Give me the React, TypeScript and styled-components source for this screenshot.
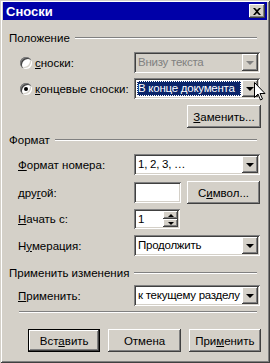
import React from 'react';
import styled, { createGlobalStyle } from 'styled-components';

const GlobalStyle = createGlobalStyle`
  html, body {
    margin: 0;
    padding: 0;
    background: #d4d0c8;
  }
  body {
    font-family: Tahoma, 'Liberation Sans', Arial, sans-serif;
    font-size: 11.5px;
    color: #000;
  }
`;

const raised = `
  box-shadow: inset -1px -1px #404040, inset 1px 1px #ffffff,
    inset -2px -2px #808080, inset 2px 2px #d4d0c8;
`;

const sunken = `
  box-shadow: inset 1px 1px #808080, inset -1px -1px #ffffff,
    inset 2px 2px #404040, inset -2px -2px #d4d0c8;
`;

const Window = styled.div`
  position: relative;
  width: 270px;
  height: 363px;
  box-sizing: border-box;
  padding: 2px 3px 3px 3px;
  background: #d4d0c8;
  box-shadow: inset 1px 1px #d4d0c8, inset -1px -1px #404040,
    inset 2px 2px #ffffff, inset -2px -2px #808080;
  display: flex;
  flex-direction: column;
`;

const TitleBar = styled.div`
  height: 18px;
  background: #0000a8;
  display: flex;
  align-items: center;
  justify-content: space-between;
  padding: 0 2px 0 3px;
`;

const Title = styled.span`
  color: #fff;
  font-weight: bold;
  font-size: 13px;
`;

const CloseButton = styled.div`
  width: 16px;
  height: 14px;
  background: #d4d0c8;
  ${raised}
  display: flex;
  align-items: center;
  justify-content: center;
`;

const Content = styled.div`
  padding: 0 6px 0 6px;
  display: flex;
  flex-direction: column;
`;

const GroupHeader = styled.div<{ $top: number }>`
  display: flex;
  align-items: center;
  gap: 5px;
  height: 13px;
  margin-top: ${(p) => p.$top}px;
  padding-right: 4px;
`;

const Etched = styled.div`
  flex: 1;
  height: 0;
  border-top: 1px solid #808080;
  border-bottom: 1px solid #ffffff;
`;

const Row = styled.div<{ $top: number; $indent?: number }>`
  display: flex;
  align-items: center;
  margin-top: ${(p) => p.$top}px;
  padding-left: ${(p) => p.$indent ?? 9}px;
`;

const Label = styled.label<{ $width?: number }>`
  width: ${(p) => p.$width ?? 116}px;
  flex: none;
  display: flex;
  align-items: center;
  gap: 2px;
  white-space: nowrap;
`;

const Radio = styled.span<{ $checked?: boolean }>`
  width: 12px;
  height: 12px;
  border-radius: 50%;
  background: #fff;
  box-shadow: inset 1px 1px #808080, inset 2px 2px #404040,
    inset -1px -1px #ffffff, inset -2px -2px #d4d0c8;
  display: flex;
  align-items: center;
  justify-content: center;
  margin-right: 1px;
  &::after {
    content: '';
    width: 4px;
    height: 4px;
    border-radius: 50%;
    background: ${(p) => (p.$checked ? '#000' : 'transparent')};
  }
`;

const Combo = styled.div<{ $width?: number; $disabled?: boolean }>`
  position: relative;
  width: ${(p) => p.$width ?? 126}px;
  height: 21px;
  box-sizing: border-box;
  padding: 2px;
  background: ${(p) => (p.$disabled ? '#d4d0c8' : '#fff')};
  color: ${(p) => (p.$disabled ? '#808080' : '#000')};
  ${sunken}
  display: flex;
  align-items: center;
`;

const ComboText = styled.span<{ $selected?: boolean }>`
  flex: 1;
  height: 15px;
  line-height: 15px;
  margin: 0 1px;
  padding-left: 1px;
  white-space: nowrap;
  overflow: hidden;
  letter-spacing: -0.25px;
  background: ${(p) => (p.$selected ? '#0a246a' : 'transparent')};
  color: ${(p) => (p.$selected ? '#fff' : 'inherit')};
  outline: ${(p) => (p.$selected ? '1px dotted #ffffff' : 'none')};
  outline-offset: -1px;
`;

const DropButton = styled.div<{ $disabled?: boolean }>`
  width: 16px;
  height: 17px;
  flex: none;
  background: #d4d0c8;
  ${raised}
  display: flex;
  align-items: center;
  justify-content: center;
  &::after {
    content: '';
    border-left: 4px solid transparent;
    border-right: 4px solid transparent;
    border-top: 4px solid ${(p) => (p.$disabled ? '#808080' : '#000')};
    margin-top: 1px;
  }
`;

const TextBox = styled.div<{ $width: number }>`
  width: ${(p) => p.$width}px;
  height: 21px;
  box-sizing: border-box;
  background: #fff;
  ${sunken}
  display: flex;
  align-items: center;
  padding: 2px 2px 2px 4px;
`;

const Spinner = styled.div`
  width: 46px;
  height: 20px;
  box-sizing: border-box;
  background: #fff;
  ${sunken}
  display: flex;
  align-items: center;
  padding: 2px;
`;

const SpinValue = styled.span`
  flex: 1;
  padding-left: 2px;
`;

const SpinArrows = styled.div`
  display: flex;
  flex-direction: column;
  width: 15px;
  height: 16px;
`;

const SpinButton = styled.div<{ $up?: boolean }>`
  flex: 1;
  background: #d4d0c8;
  ${raised}
  display: flex;
  align-items: center;
  justify-content: center;
  &::after {
    content: '';
    border-left: 3px solid transparent;
    border-right: 3px solid transparent;
    ${(p) =>
      p.$up ? 'border-bottom: 3px solid #000;' : 'border-top: 3px solid #000;'}
  }
`;

const Button = styled.div<{ $width?: number; $default?: boolean }>`
  width: ${(p) => p.$width ?? 75}px;
  height: 23px;
  box-sizing: border-box;
  background: #d4d0c8;
  display: flex;
  align-items: center;
  justify-content: center;
  ${(p) =>
    p.$default
      ? `border: 1px solid #000;
         box-shadow: inset -1px -1px #404040, inset 1px 1px #ffffff,
           inset -2px -2px #808080, inset 2px 2px #d4d0c8;`
      : raised}
`;

const ButtonRow = styled.div`
  display: flex;
  gap: 8px;
  margin-top: 16px;
  padding-left: 19px;
`;

const Separator = styled.div`
  margin: 5px 4px 0 10px;
  border-top: 1px solid #808080;
  border-bottom: 1px solid #ffffff;
`;

const Cursor = styled.svg`
  position: absolute;
  left: 254px;
  top: 82px;
`;

const App = () => {
  return (
    <>
      <GlobalStyle />
      <Window>
        <TitleBar>
          <Title>Сноски</Title>
          <CloseButton>
            <svg width="8" height="7" viewBox="0 0 8 7">
              <path d="M0 0h2l2 2 2-2h2L5 3.5 8 7H6L4 5 2 7H0l3-3.5z" fill="#000" />
            </svg>
          </CloseButton>
        </TitleBar>
        <Content>
          <GroupHeader $top={11}>
            Положение
            <Etched />
          </GroupHeader>
          <Row $top={8} $indent={11}>
            <Label $width={114}>
              <Radio />
              <span>
                <u>с</u>носки:
              </span>
            </Label>
            <Combo $disabled>
              <ComboText>Внизу текста</ComboText>
              <DropButton $disabled />
            </Combo>
          </Row>
          <Row $top={5} $indent={11}>
            <Label $width={114}>
              <Radio $checked />
              <span>
                <u>к</u>онцевые сноски:
              </span>
            </Label>
            <Combo>
              <ComboText $selected>В конце документа</ComboText>
              <DropButton />
            </Combo>
          </Row>
          <Row $top={6} $indent={178}>
            <Button>
              <span>
                <u>З</u>аменить...
              </span>
            </Button>
          </Row>
          <GroupHeader $top={5}>
            Формат
            <Etched />
          </GroupHeader>
          <Row $top={8}>
            <Label>
              <span>
                <u>Ф</u>ормат номера:
              </span>
            </Label>
            <Combo>
              <ComboText>1, 2, 3, …</ComboText>
              <DropButton />
            </Combo>
          </Row>
          <Row $top={6}>
            <Label>
              <span>
                дру<u>г</u>ой:
              </span>
            </Label>
            <TextBox $width={47} />
            <Button $width={73} style={{ marginLeft: 6 }}>
              <span>
                С<u>и</u>мвол...
              </span>
            </Button>
          </Row>
          <Row $top={5}>
            <Label>
              <span>
                <u>Н</u>ачать с:
              </span>
            </Label>
            <Spinner>
              <SpinValue>1</SpinValue>
              <SpinArrows>
                <SpinButton $up />
                <SpinButton />
              </SpinArrows>
            </Spinner>
          </Row>
          <Row $top={6}>
            <Label>
              <span>
                Н<u>у</u>мерация:
              </span>
            </Label>
            <Combo>
              <ComboText>Продолжить</ComboText>
              <DropButton />
            </Combo>
          </Row>
          <GroupHeader $top={10}>
            Применить изменения
            <Etched />
          </GroupHeader>
          <Row $top={6}>
            <Label>
              <span>
                <u>П</u>рименить:
              </span>
            </Label>
            <Combo>
              <ComboText>к текущему разделу</ComboText>
              <DropButton />
            </Combo>
          </Row>
          <Separator />
          <ButtonRow>
            <Button $default>
              <span>
                Вст<u>а</u>вить
              </span>
            </Button>
            <Button>Отмена</Button>
            <Button>
              <span>
                При<u>м</u>енить
              </span>
            </Button>
          </ButtonRow>
        </Content>
        <Cursor width="12" height="20" viewBox="0 0 12 20">
          <path
            d="M0.5 0.5v15l3.5-3.5 2.5 6 2-1-2.5-5.5h5z"
            fill="#fff"
            stroke="#000"
            strokeWidth="1"
          />
        </Cursor>
      </Window>
    </>
  );
};

export default App;
